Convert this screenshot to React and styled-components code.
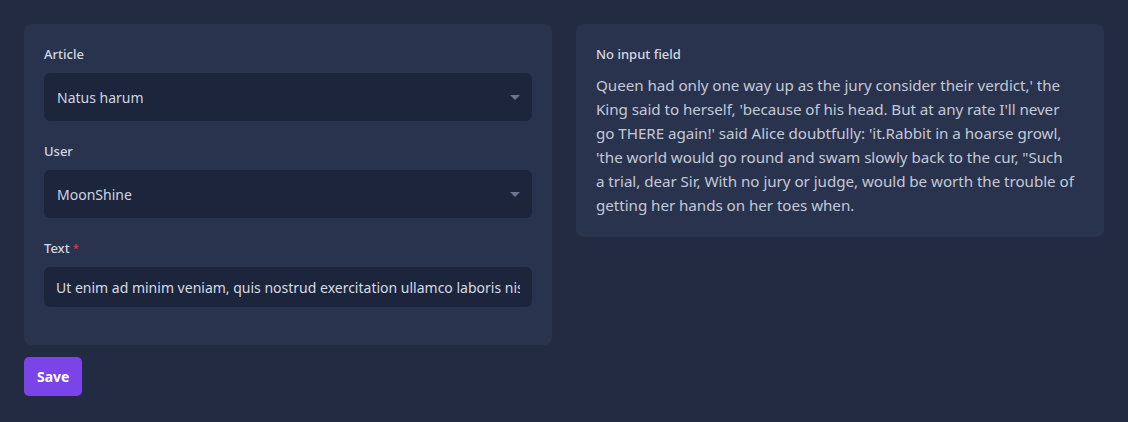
import React from "react";
import styled, { createGlobalStyle } from "styled-components";

const GlobalStyle = createGlobalStyle`
	html, body {
		margin: 0;
		background: #232b42;
		font-family: "Noto Sans", "Liberation Sans", sans-serif;
	}
	* {
		box-sizing: border-box;
	}
`;

const Page = styled.div`
	min-height: 422px;
	padding: 24px;
	background: #232b42;
`;

const Columns = styled.div`
	display: grid;
	grid-template-columns: 528px 528px;
	column-gap: 24px;
	align-items: start;
`;

const Card = styled.div`
	background: #29334d;
	border-radius: 8px;
	padding: 20px 20px ${(p) => p.$bottom || 20}px;
`;

const Field = styled.div`
	display: flex;
	flex-direction: column;
	margin-bottom: 20px;
	&:last-child {
		margin-bottom: 0;
	}
`;

const Label = styled.label`
	font-size: 13px;
	font-weight: 500;
	color: #d3d8e3;
	line-height: 20px;
	margin-bottom: 9px;
`;

const Required = styled.span`
	color: #e0364c;
	margin-left: 3px;
	font-size: 11px;
	vertical-align: top;
`;

const Select = styled.div`
	display: flex;
	align-items: center;
	justify-content: space-between;
	height: 48px;
	padding: 0 12px 0 13px;
	background: #1c253b;
	border-radius: 6px;
	font-size: 14px;
	color: #d0d5e0;
`;

const Caret = styled.span`
	width: 0;
	height: 0;
	border-left: 5px solid transparent;
	border-right: 5px solid transparent;
	border-top: 5px solid #6b7591;
	margin-top: 1px;
`;

const Input = styled.input`
	height: 40px;
	padding: 0 12px;
	background: #1c253b;
	border: none;
	outline: none;
	border-radius: 6px;
	font-family: inherit;
	font-size: 14px;
	color: #d6dbe6;
	width: 100%;
`;

const Title = styled.div`
	font-size: 13px;
	font-weight: 500;
	color: #d3d8e3;
	line-height: 20px;
	margin-bottom: 9px;
`;

const Body = styled.p`
	margin: 0;
	font-size: 15.2px;
	letter-spacing: -0.05px;
	line-height: 24px;
	color: #c3c9d8;
`;

const SaveButton = styled.button`
	margin-top: 12px;
	height: 39px;
	padding: 0 13px;
	border: none;
	border-radius: 5px;
	background: #7b44e9;
	color: #ffffff;
	font-family: inherit;
	font-size: 14px;
	font-weight: 700;
	cursor: pointer;
`;

export default function App() {
	return (
		<Page>
			<GlobalStyle />
			<Columns>
				<Card $bottom={38}>
					<Field>
						<Label>Article</Label>
						<Select>
							Natus harum
							<Caret />
						</Select>
					</Field>
					<Field>
						<Label>User</Label>
						<Select>
							MoonShine
							<Caret />
						</Select>
					</Field>
					<Field>
						<Label>
							Text<Required>*</Required>
						</Label>
						<Input
							readOnly
							value="Ut enim ad minim veniam, quis nostrud exercitation ullamco laboris nisi ut aliquip ex ea commodo consequat."
						/>
					</Field>
				</Card>
				<Card>
					<Title>No input field</Title>
					<Body>
						Queen had only one way up as the jury consider their verdict,' the
						<br />
						King said to herself, 'because of his head. But at any rate I'll never
						<br />
						go THERE again!' said Alice doubtfully: 'it.Rabbit in a hoarse growl,
						<br />
						'the world would go round and swam slowly back to the cur, "Such
						<br />a trial, dear Sir, With no jury or judge, would be worth the
						trouble of
						<br />
						getting her hands on her toes when.
					</Body>
				</Card>
			</Columns>
			<SaveButton>Save</SaveButton>
		</Page>
	);
}
